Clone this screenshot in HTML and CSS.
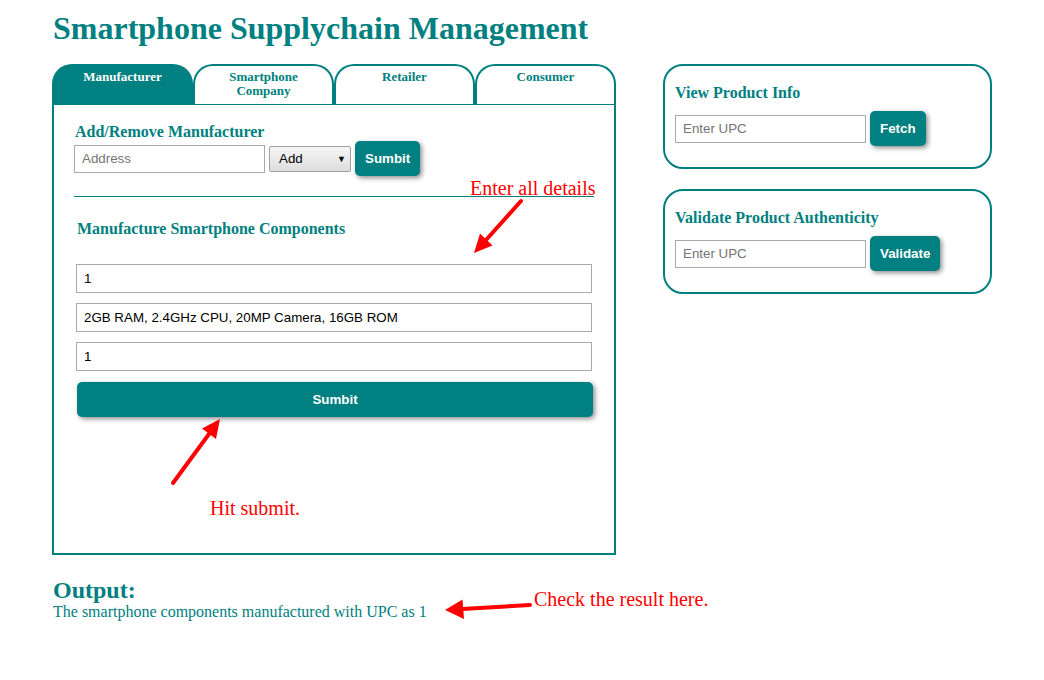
FILE: index.html
```html
<!DOCTYPE html>
<html>
<head>
<meta charset="utf-8">
<title>Smartphone Supplychain Management</title>
<link rel="stylesheet" href="styles.css">
</head>
<body>
<div class="page">
  <h1 class="title">Smartphone Supplychain Management</h1>
  <div class="main">
    <div class="left">
      <div class="tabs">
        <div class="tab active">Manufacturer</div>
        <div class="tab">Smartphone<br>Company</div>
        <div class="tab">Retailer</div>
        <div class="tab">Consumer</div>
      </div>
      <div class="tab-body">
        <h3 class="sec-title">Add/Remove Manufacturer</h3>
        <div class="row">
          <input class="field short" type="text" placeholder="Address">
          <div class="select"><span>Add</span><span class="caret">▼</span></div>
          <button class="btn">Sumbit</button>
        </div>
        <hr class="rule">
        <h3 class="sec-title sub">Manufacture Smartphone Components</h3>
        <div class="form">
          <input class="field wide" type="text" value="1">
          <input class="field wide" type="text" value="2GB RAM, 2.4GHz CPU, 20MP Camera, 16GB ROM">
          <input class="field wide" type="text" value="1">
          <button class="btn full">Sumbit</button>
        </div>
      </div>
    </div>
    <div class="right">
      <div class="card">
        <h3 class="sec-title">View Product Info</h3>
        <div class="row">
          <input class="field short" type="text" placeholder="Enter UPC">
          <button class="btn">Fetch</button>
        </div>
      </div>
      <div class="card">
        <h3 class="sec-title">Validate Product Authenticity</h3>
        <div class="row">
          <input class="field short" type="text" placeholder="Enter UPC">
          <button class="btn">Validate</button>
        </div>
      </div>
    </div>
  </div>
  <div class="output">
    <h2 class="out-title">Output:</h2>
    <div class="out-text">The smartphone components manufactured with UPC as 1</div>
  </div>
</div>

<svg class="arrows" width="1044" height="680" viewBox="0 0 1044 680">
  <g stroke="#ff0000" stroke-width="4" stroke-linecap="round" fill="none">
    <line x1="521" y1="201" x2="486" y2="240"/>
    <line x1="173" y1="483" x2="209" y2="434"/>
    <line x1="530" y1="605" x2="462" y2="609"/>
  </g>
  <g fill="#ff0000">
    <polygon points="474,253 492.5,245.5 480,233.5"/>
    <polygon points="220,419 216,439 202,428.5"/>
    <polygon points="445,610 464,619 462.5,599.5"/>
  </g>
</svg>
<div class="note note1">Enter all details</div>
<div class="note note2">Hit submit.</div>
<div class="note note3">Check the result here.</div>
</body>
</html>
```

FILE: styles.css
```css
html, body {
  margin: 0;
  padding: 0;
  background: #ffffff;
}
body {
  font-family: "Liberation Serif", "Times New Roman", serif;
  color: #008080;
  position: relative;
  width: 1044px;
  height: 680px;
  overflow: hidden;
}
.page {
  padding: 0 52px;
}
.title {
  font-size: 32px;
  font-weight: bold;
  margin: 10px 0 0 1px;
  line-height: 36px;
  color: #008080;
}
.main {
  display: flex;
  align-items: flex-start;
  gap: 47px;
  margin-top: 18px;
}
.left {
  width: 564px;
}
.tabs {
  display: flex;
  height: 40px;
}
.tab {
  flex: 1;
  box-sizing: border-box;
  border: 2px solid #008080;
  border-bottom: none;
  border-radius: 20px 20px 0 0;
  text-align: center;
  font-weight: bold;
  font-size: 13px;
  line-height: 14px;
  padding-top: 4px;
  color: #008080;
  background: #fff;
}
.tab.active {
  background: #008080;
  color: #ffffff;
}
.tab-body {
  box-sizing: border-box;
  height: 451px;
  border: 2px solid #008080;
  border-top: 1px solid #008080;
  padding: 18px 20px 0 20px;
}
.sec-title {
  font-size: 16px;
  font-weight: bold;
  line-height: 18px;
  margin: 0 0 0 1px;
  color: #008080;
}
.sec-title.sub {
  margin: 23px 0 0 3px;
}
.row {
  display: flex;
  align-items: center;
  gap: 4px;
  margin-top: 0;
}
.field {
  box-sizing: border-box;
  border: 1px solid #aaaaaa;
  font-family: "Liberation Sans", Arial, sans-serif;
  font-size: 13.33px;
  color: #000;
  padding: 0 7px;
  background: #fff;
  outline: none;
}
.field::placeholder {
  color: #757575;
}
.field.short {
  width: 191px;
  height: 28px;
}
.select {
  box-sizing: border-box;
  width: 82px;
  height: 26px;
  border: 1px solid #a0a0a0;
  border-radius: 2px;
  background: linear-gradient(#f6f6f6, #dddddd);
  font-family: "Liberation Sans", Arial, sans-serif;
  font-size: 13.33px;
  color: #000;
  display: flex;
  align-items: center;
  justify-content: space-between;
  padding: 0 4px 0 9px;
}
.caret {
  font-size: 9px;
}
.btn {
  box-sizing: border-box;
  height: 35px;
  border: none;
  border-radius: 5px;
  background: #008080;
  color: #ffffff;
  font-family: "Liberation Sans", Arial, sans-serif;
  font-weight: bold;
  font-size: 13.33px;
  padding: 0 10px;
  box-shadow: 2px 2px 5px rgba(0, 0, 0, 0.45);
}
.rule {
  border: none;
  border-top: 1px solid #008080;
  margin: 20px 0 0 0;
  height: 0;
}
.form {
  display: flex;
  flex-direction: column;
  gap: 10px;
  margin: 26px 2px 0 2px;
}
.field.wide {
  width: 516px;
  height: 29px;
}
.btn.full {
  width: 516px;
  margin-top: 1px;
  margin-left: 1px;
}
.right {
  width: 329px;
  display: flex;
  flex-direction: column;
  gap: 20px;
}
.card {
  box-sizing: border-box;
  border: 2px solid #008080;
  border-radius: 20px;
  padding: 18px 10px 0 10px;
  height: 105px;
}
.card .sec-title {
  margin-left: 0;
  margin-bottom: 9px;
}
.output {
  margin-top: 23px;
  margin-left: 1px;
}
.out-title {
  font-size: 24px;
  font-weight: bold;
  margin: 0;
  line-height: 25px;
}
.out-text {
  font-size: 16px;
  line-height: 18px;
}
.arrows {
  position: absolute;
  left: 0;
  top: 0;
  pointer-events: none;
}
.note {
  position: absolute;
  color: #ff0000;
  font-family: "Liberation Serif", "Times New Roman", serif;
  font-size: 20px;
  line-height: 22px;
  white-space: nowrap;
}
.note1 { left: 470px; top: 177px; }
.note2 { left: 210px; top: 497px; }
.note3 { left: 534px; top: 588px; }
```
